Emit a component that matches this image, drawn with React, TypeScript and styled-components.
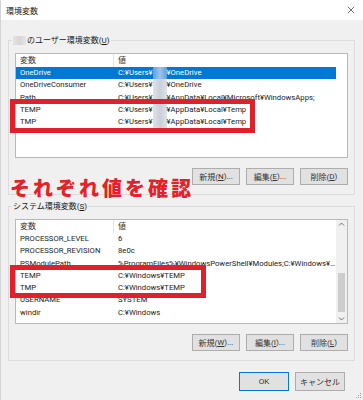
import React from "react";
import styled, { createGlobalStyle } from "styled-components";

const GlobalStyle = createGlobalStyle`
  html, body {
    margin: 0;
    padding: 0;
    background: #f0f0f0;
  }
  body {
    font-family: "Roboto", "Noto Sans CJK JP", sans-serif;
    font-size: 8px;
    color: #1a1a1a;
  }
`;

interface iVar {
  name: string;
  value: React.ReactNode;
  selected?: boolean;
}

const Blur = ({ selected }: { selected?: boolean }) => <BlurBox $selected={selected} />;

const userVars: iVar[] = [
  {
    name: "OneDrive",
    value: (
      <>
        C:¥Users¥
        <Blur selected />
        ¥OneDrive
      </>
    ),
    selected: true,
  },
  {
    name: "OneDriveConsumer",
    value: (
      <>
        C:¥Users¥
        <Blur />
        ¥OneDrive
      </>
    ),
  },
  {
    name: "Path",
    value: (
      <>
        C:¥Users¥
        <Blur />
        ¥AppData¥Local¥Microsoft¥WindowsApps;
      </>
    ),
  },
  {
    name: "TEMP",
    value: (
      <>
        C:¥Users¥
        <Blur />
        ¥AppData¥Local¥Temp
      </>
    ),
  },
  {
    name: "TMP",
    value: (
      <>
        C:¥Users¥
        <Blur />
        ¥AppData¥Local¥Temp
      </>
    ),
  },
];

const systemVars: iVar[] = [
  { name: "PROCESSOR_LEVEL", value: "6" },
  { name: "PROCESSOR_REVISION", value: "8e0c" },
  {
    name: "PSModulePath",
    value: "%ProgramFiles%¥WindowsPowerShell¥Modules;C:¥Windows¥system32¥WindowsPowerShell",
  },
  { name: "TEMP", value: "C:¥Windows¥TEMP" },
  { name: "TMP", value: "C:¥Windows¥TEMP" },
  { name: "USERNAME", value: "SYSTEM" },
  { name: "windir", value: "C:¥Windows" },
];

function VarList({ vars, scroll }: { vars: iVar[]; scroll?: boolean }) {
  return (
    <ListBox>
      <ListInner>
        <Header>
          <Cell>変数</Cell>
          <Cell $divider>値</Cell>
        </Header>
        {vars.map((v) => (
          <Row key={v.name} $selected={v.selected}>
            <Cell>{v.name}</Cell>
            <Cell>{v.value}</Cell>
          </Row>
        ))}
      </ListInner>
      {scroll && (
        <ScrollBar>
          <Arrow viewBox="0 0 8 6">
            <path d="M1.5 4 L4 1.5 L6.5 4" fill="none" stroke="#606060" strokeWidth="0.9" />
          </Arrow>
          <Track>
            <Thumb />
          </Track>
          <Arrow viewBox="0 0 8 6">
            <path d="M1.5 2 L4 4.5 L6.5 2" fill="none" stroke="#606060" strokeWidth="0.9" />
          </Arrow>
        </ScrollBar>
      )}
    </ListBox>
  );
}

function App() {
  return (
    <Window>
      <GlobalStyle />
      <TitleBar>
        <span>環境変数</span>
        <CloseIcon viewBox="0 0 10 10">
          <path d="M1 1 L9 9 M9 1 L1 9" stroke="#333" strokeWidth="0.9" />
        </CloseIcon>
      </TitleBar>
      <Body>
        <Group>
          <Legend>
            <BlurLabel />
            のユーザー環境変数(<u>U</u>)
          </Legend>
          <VarList vars={userVars} />
          <ButtonRow>
            <Button>
              新規(<u>N</u>)...
            </Button>
            <Button>
              編集(<u>E</u>)...
            </Button>
            <Button>
              削除(<u>D</u>)
            </Button>
          </ButtonRow>
        </Group>
        <Group $top={6}>
          <Legend>
            システム環境変数(<u>S</u>)
          </Legend>
          <VarList vars={systemVars} scroll />
          <ButtonRow>
            <Button>
              新規(<u>W</u>)...
            </Button>
            <Button>
              編集(<u>I</u>)...
            </Button>
            <Button>
              削除(<u>L</u>)
            </Button>
          </ButtonRow>
        </Group>
        <Footer>
          <Button $w={50} $h={19} $primary>
            OK
          </Button>
          <Button $w={50} $h={19}>
            キャンセル
          </Button>
        </Footer>
      </Body>

      {/* annotations drawn over the dialog */}
      <RedBox style={{ left: 9, top: 99, width: 245, height: 34 }} />
      <RedBox style={{ left: 9, top: 265, width: 196, height: 33 }} />
      <Note>それぞれ値を確認</Note>

      <Grip viewBox="0 0 8 8">
        <rect x="6" y="2" width="1" height="1" fill="#a0a0a0" />
        <rect x="4" y="4" width="1" height="1" fill="#a0a0a0" />
        <rect x="6" y="4" width="1" height="1" fill="#a0a0a0" />
        <rect x="2" y="6" width="1" height="1" fill="#a0a0a0" />
        <rect x="4" y="6" width="1" height="1" fill="#a0a0a0" />
        <rect x="6" y="6" width="1" height="1" fill="#a0a0a0" />
      </Grip>
    </Window>
  );
}

export default App;

const Window = styled.div`
  position: relative;
  width: 363px;
  height: 400px;
  background: #f0f0f0;
  overflow: hidden;
  box-sizing: border-box;
  border-left: 1px solid #d4d4d4;
`;

const TitleBar = styled.div`
  height: 20px;
  background: #ffffff;
  display: flex;
  align-items: center;
  justify-content: space-between;
  padding: 0 8px 0 5px;
  font-size: 8px;
  color: #1a1a1a;
`;

const CloseIcon = styled.svg`
  width: 8px;
  height: 8px;
`;

const Body = styled.div`
  padding: 15px 8px 0 7px;
`;

const Group = styled.fieldset<{ $top?: number }>`
  margin: ${(p) => p.$top ?? 0}px 0 0 0;
  padding: 7px 6px 9px 6px;
  border: 1px solid #dcdcdc;
  min-width: 0;
`;

const Legend = styled.legend`
  padding: 0 1px;
  margin-left: -3px;
  line-height: 11px;
  font-size: 8px;
  color: #1a1a1a;
  display: flex;
  align-items: center;

  u {
    text-decoration: underline;
  }
`;

const BlurLabel = styled.span`
  display: inline-block;
  width: 13px;
  height: 9px;
  margin-right: 1px;
  background: linear-gradient(90deg, #e4e4e4, #d6d6d6, #e4e4e4);
`;

const ListBox = styled.div`
  position: relative;
  height: 105px;
  box-sizing: border-box;
  border: 1px solid #b9b9b9;
  background: #ffffff;
  display: flex;
  overflow: hidden;
`;

const ListInner = styled.div`
  width: 320px;
  flex: none;
`;

const Header = styled.div`
  display: grid;
  grid-template-columns: 98px 222px;
  height: 13px;
  line-height: 13px;
  color: #333;
`;

const Row = styled.div<{ $selected?: boolean }>`
  display: grid;
  grid-template-columns: 98px 222px;
  height: 12.3px;
  line-height: 12.3px;
  font-size: 7.7px;
  background: ${(p) => (p.$selected ? "#0078d7" : "transparent")};
  color: ${(p) => (p.$selected ? "#ffffff" : "#1a1a1a")};
`;

const Cell = styled.div<{ $divider?: boolean }>`
  padding-left: 4px;
  box-sizing: border-box;
  white-space: nowrap;
  overflow: hidden;
  text-overflow: ellipsis;
  height: 100%;
  border-left: ${(p) => (p.$divider ? "1px solid #e5e5e5" : "none")};
  margin-left: ${(p) => (p.$divider ? "-1px" : "0")};
`;

const BlurBox = styled.span<{ $selected?: boolean }>`
  display: inline-block;
  width: 14px;
  height: 12.3px;
  vertical-align: top;
  background: ${(p) =>
    p.$selected
      ? "linear-gradient(90deg, #5aa0e0, #9cc4ea, #5aa0e0)"
      : "linear-gradient(90deg, #dfe3e8, #c8cfd7, #dfe3e8)"};
`;

const ScrollBar = styled.div`
  margin-left: auto;
  width: 11px;
  display: flex;
  flex-direction: column;
  background: #f0f0f0;
`;

const Arrow = styled.svg`
  width: 11px;
  height: 9px;
  flex: none;
  padding: 1px 1.5px;
  box-sizing: border-box;
`;

const Track = styled.div`
  flex: 1;
  display: flex;
  flex-direction: column;
  justify-content: flex-end;
  padding: 0 2px 2px 2px;
`;

const Thumb = styled.div`
  height: 39px;
  background: #cdcdcd;
`;

const ButtonRow = styled.div`
  display: flex;
  justify-content: flex-end;
  gap: 6px;
  margin-top: 10px;
`;

const Button = styled.div<{ $w?: number; $h?: number; $primary?: boolean }>`
  width: ${(p) => p.$w ?? 48}px;
  height: ${(p) => p.$h ?? 17}px;
  box-sizing: border-box;
  background: #e1e1e1;
  border: 1px solid ${(p) => (p.$primary ? "#0078d7" : "#adadad")};
  display: flex;
  align-items: center;
  justify-content: center;
  font-size: 8px;
  color: #333;
  white-space: nowrap;

  u {
    text-decoration: underline;
  }
`;

const Footer = styled.div`
  display: flex;
  justify-content: flex-end;
  gap: 6px;
  margin-top: 11px;
  padding-right: 10px;
`;

const RedBox = styled.div`
  position: absolute;
  box-sizing: border-box;
  border: 5px solid #e0202b;
`;

const Note = styled.div`
  position: absolute;
  left: 9px;
  top: 178px;
  font-family: "Noto Sans CJK JP", sans-serif;
  font-size: 20px;
  font-weight: 900;
  line-height: 1;
  letter-spacing: 3px;
  color: #e52029;
  white-space: nowrap;
`;

const Grip = styled.svg`
  position: absolute;
  right: 1px;
  bottom: 1px;
  width: 8px;
  height: 8px;
`;
